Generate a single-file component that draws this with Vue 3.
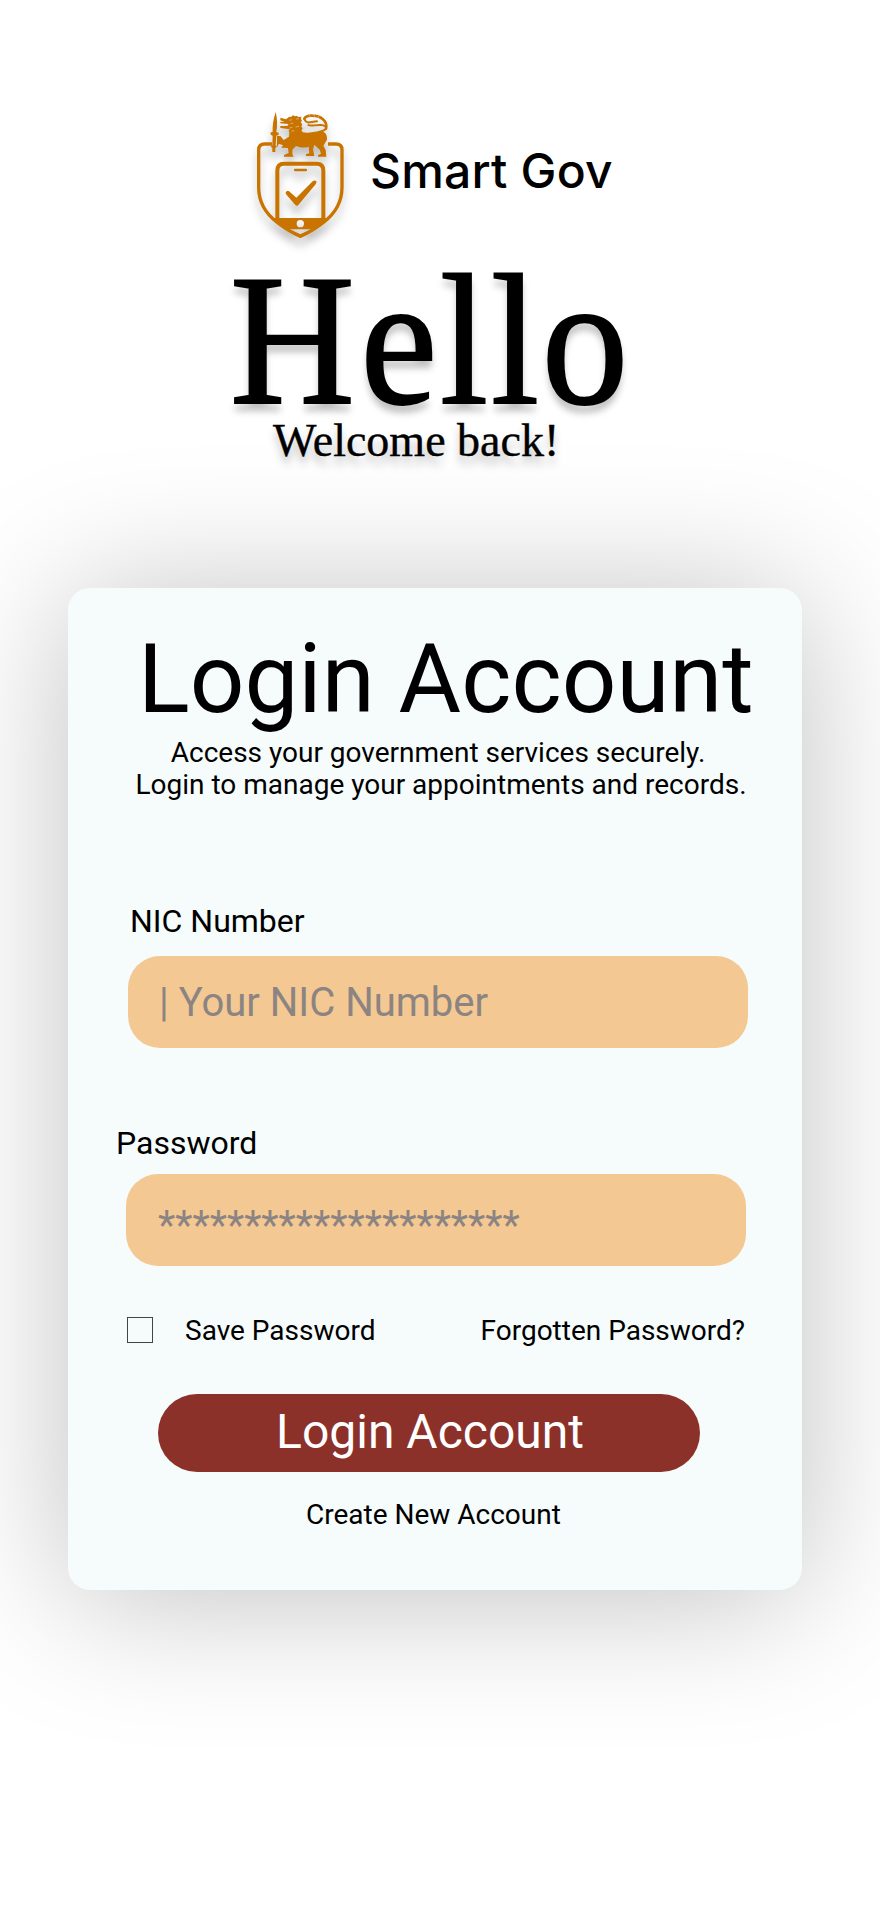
<script setup>
import { ref } from 'vue'

const nic = ref('| Your NIC Number')
const mask = '*'.repeat(21)
</script>

<template>
  <main class="screen">
    <header class="brand">
      <svg class="logo" viewBox="0 0 360 480" width="120" height="160" aria-label="Smart Gov emblem">
        <g fill="none" stroke="#c97400" stroke-linejoin="round">
          <path stroke-width="10" d="M96 132H74Q56 132 56 150V262C56 312 84 346 110 366Q142 392 181 409Q220 392 252 366C278 346 306 312 306 262V150Q306 132 288 132H264" />
          <path stroke-width="12" d="M112 360V212Q112 191 132 191H230Q250 191 250 212V360" />
          <path stroke-width="7" stroke-linecap="round" d="M165 210H198" />
        </g>
        <path fill="#c97400" d="M137 277Q142 269 149 275L169 293L218 244Q224 239 229 243Q231 247 227 253L175 315Q171 320 166 315L140 285Q136 281 137 277Z" />
        <path fill="#c97400" fill-rule="evenodd" d="M98 354H264Q226 394 181 414Q136 394 98 354ZM181 360A11 11 0 1 0 181 382A11 11 0 1 0 181 360ZM148 388H214L181 403Z" />
        <g fill="#c97400">
          <path d="M107 36C100 57 97 77 98 96L92 97V104L98 107L97 136L92 140L97 144V156H106V144L111 140L107 136L109 107L116 104V98L109 96C113 77 112 56 107 36Z" />
          <path d="M111 107L122 109L131 120L147 110L148 98L146 91L150 88L121 84V78L142 78L146 72L120 70L122 65L134 66L121 61V53L138 58L148 50L153 51L159 46L165 49L171 47L174 51L184 50L183 57L186 62L182 67L187 73L184 79L188 86L184 91L188 97C204 101 222 95 240 94C254 94 262 102 261 119L250 137L257 150L259 170H234V165L243 161L239 149L223 134L219 148L223 168H198V163L208 160L206 140C192 145 177 142 168 138L157 149L157 163L161 170H132V165L146 159L144 144L124 143L129 136L117 131L111 142Z" />
        </g>
        <g fill="none" stroke="#c97400" stroke-linecap="round">
          <path stroke-width="6" d="M236 96C265 90 264 77 243 75C226 74 212 80 205 75" />
          <path stroke-width="8" d="M258 86C264 64 243 47 216 47Q199 46 193 56" />
          <path stroke-width="6" d="M193 57Q197 69 210 67L231 64" />
        </g>
        <g fill="none" stroke="#f3ddbd" stroke-width="1.5">
          <path d="M148 61L156 59M168 57L177 56M151 70H160M148 84L157 82M167 81L177 79M154 94L163 92" />
          <path d="M207 44L210 50M222 44L224 50M236 47L235 53" />
        </g>
      </svg>
      <span class="brand-name">Smart Gov</span>
    </header>

    <section class="greeting">
      <h1><span class="initial">H</span>ello</h1>
      <p>Welcome back!</p>
    </section>

    <form class="card" @submit.prevent>
      <h2>Login Account</h2>
      <p class="intro">
        <span>Access your government services securely.</span>
        <span class="intro-second">Login to manage your appointments and records.</span>
      </p>

      <label class="label nic-label">NIC Number</label>
      <div class="field nic-field">{{ nic }}</div>

      <label class="label password-label">Password</label>
      <div class="field password-field">{{ mask }}</div>

      <div class="options">
        <span class="checkbox"></span>
        <span class="save">Save Password</span>
        <a class="forgot">Forgotten Password?</a>
      </div>

      <button class="submit">Login Account</button>
      <a class="create">Create New Account</a>
    </form>
  </main>
</template>

<style>
body {
  margin: 0;
  background: #fff;
}
</style>

<style scoped>
.screen {
  box-sizing: border-box;
  width: 880px;
  height: 1912px;
  padding-top: 100px;
  overflow: hidden;
  background: #fff;
  color: #000;
  font-family: Roboto, sans-serif;
}
.brand {
  display: flex;
  height: 160px;
  padding-left: 240px;
}
.logo {
  flex: none;
  filter: drop-shadow(0 8px 4px rgba(0, 0, 0, 0.25));
}
.brand-name {
  margin: 42px 0 0 10px;
  font: 500 48px/58px Inter, sans-serif;
  letter-spacing: 0.2px;
  white-space: nowrap;
}
.greeting {
  height: 328px;
  font-family: "Liberation Serif", serif;
  text-shadow: 0 8px 8px rgba(0, 0, 0, 0.25);
}
.greeting h1 {
  width: max-content;
  margin: 0 0 0 230px;
  font-size: 186px;
  font-weight: 400;
  line-height: 160px;
  letter-spacing: 3px;
  transform: scaleX(0.93);
  transform-origin: left;
  -webkit-text-stroke: 2px #000;
}
.initial {
  letter-spacing: 6px;
}
.greeting p {
  width: max-content;
  margin: -4px 0 0 273px;
  font-size: 46px;
  line-height: 50px;
  -webkit-text-stroke: 0.4px #000;
}
.card {
  display: flex;
  flex-direction: column;
  align-items: flex-start;
  box-sizing: border-box;
  width: 734px;
  height: 1002px;
  margin-left: 68px;
  padding-top: 35px;
  border-radius: 22px;
  background: #f6fcfc;
  box-shadow: 0 8px 144px rgba(0, 0, 0, 0.25);
}
h2 {
  margin: 0 0 2px 70px;
  font-size: 96px;
  font-weight: 400;
  line-height: 112px;
  white-space: nowrap;
}
.intro {
  display: flex;
  flex-direction: column;
  align-items: center;
  width: 620px;
  margin: 0 0 101px 60px;
  font-size: 28px;
  line-height: 32px;
  white-space: nowrap;
}
.intro-second {
  padding-left: 6px;
}
.label {
  font-size: 32px;
  line-height: 38px;
}
.nic-label {
  margin: 0 0 16px 62px;
}
.password-label {
  margin: 76px 0 12px 48px;
}
.field {
  display: flex;
  align-items: center;
  box-sizing: border-box;
  width: 620px;
  height: 92px;
  padding-left: 32px;
  border-radius: 32px;
  background: #f4c892;
  color: #8b8482;
  font-size: 40px;
  line-height: 46px;
}
.nic-field {
  margin-left: 60px;
  padding-left: 31px;
  padding-top: 1px;
}
.password-field {
  margin-left: 58px;
  padding-top: 12px;
}
.options {
  display: flex;
  align-items: center;
  width: 620px;
  height: 32px;
  margin: 48px 0 48px 59px;
  font-size: 28px;
  line-height: 32px;
  white-space: nowrap;
}
.checkbox {
  box-sizing: border-box;
  width: 26px;
  height: 26px;
  border: 1px solid #444;
}
.save,
.forgot {
  padding-top: 2px;
}
.save {
  margin-left: 32px;
}
.forgot {
  margin-left: 105px;
}
.submit {
  width: 542px;
  height: 78px;
  margin-left: 90px;
  padding: 0 0 2px 2px;
  border: 0;
  border-radius: 39px;
  background: #8c312a;
  color: #fff;
  font: 400 48px/56px Roboto, sans-serif;
}
.create {
  margin: 27px 0 0 238px;
  font-size: 28px;
  line-height: 32px;
}
</style>
